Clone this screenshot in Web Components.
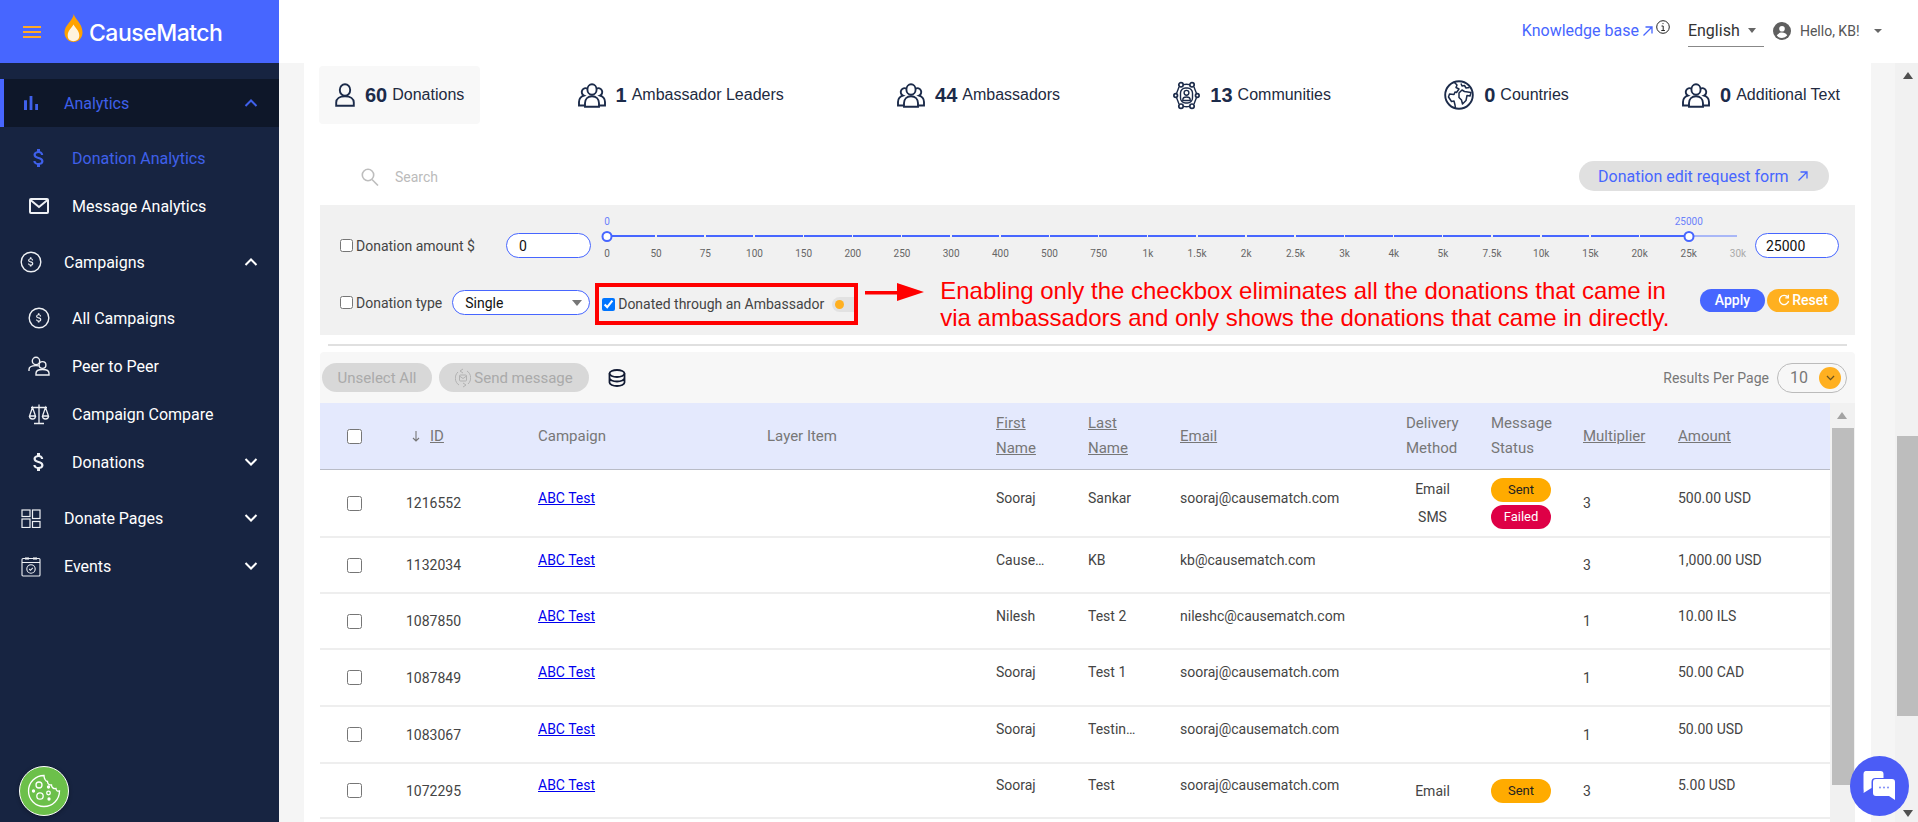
<!DOCTYPE html>
<html lang="en">
<head>
<meta charset="utf-8">
<title>CauseMatch</title>
<style>
  html, body { margin: 0; height: 822px; overflow: hidden; background: #f5f5f5; font-family: Roboto, "Liberation Sans", sans-serif; }
</style>
</head>
<body>
<cm-app>
  <cm-sidebar slot="side"></cm-sidebar>
  <cm-topbar slot="top"></cm-topbar>
  <cm-card slot="main">
    <cm-stats></cm-stats>
    <cm-search-row></cm-search-row>
    <cm-filters></cm-filters>
    <cm-toolbar></cm-toolbar>
    <cm-table></cm-table>
  </cm-card>
</cm-app>
<cm-fab kind="cookie"></cm-fab>
<cm-fab kind="chat"></cm-fab>

<script>
const DOLLAR = "M11.8 10.9c-2.27-.59-3-1.2-3-2.15 0-1.09 1.01-1.85 2.7-1.85 1.78 0 2.44.85 2.5 2.1h2.21c-.07-1.72-1.12-3.3-3.21-3.81V3h-3v2.16c-1.94.42-3.5 1.68-3.5 3.61 0 2.31 1.91 3.46 4.7 4.13 2.5.6 3 1.48 3 2.41 0 .69-.49 1.79-2.7 1.79-2.06 0-2.87-.92-2.98-2.1h-2.2c.12 2.19 1.76 3.42 3.68 3.83V21h3v-2.15c1.95-.37 3.5-1.5 3.5-3.55 0-2.84-2.43-3.81-4.7-4.4z";

const ICONS = {
  bars: `<svg width="24" height="24" viewBox="0 0 24 24" fill="currentColor"><path d="M5 9.2h3V19H5zM10.6 5h2.8v14h-2.8zm5.6 8H19v6h-2.8z"/></svg>`,
  dollar: `<svg width="24" height="24" viewBox="0 0 24 24" fill="currentColor"><path d="${DOLLAR}"/></svg>`,
  mail: `<svg width="22" height="18" viewBox="0 0 22 18" fill="none" stroke="currentColor" stroke-width="2"><rect x="2" y="2" width="18" height="14" rx="1"/><path d="M2.5 3l8.5 7 8.5-7"/></svg>`,
  coin: `<svg width="22" height="22" viewBox="0 0 22 22" fill="none"><circle cx="11" cy="11" r="9.8" stroke="currentColor" stroke-width="1.4"/><path transform="translate(4.7 4.7) scale(.52)" fill="currentColor" d="${DOLLAR}"/></svg>`,
  peer: `<svg width="22" height="20" viewBox="0 0 22 20" fill="none" stroke="currentColor" stroke-width="1.4"><circle cx="8" cy="5" r="3.7"/><path d="M1 15v-1.5C1 11 4 9.6 8 9.6c1 0 2 .1 2.8.3"/><circle cx="14.5" cy="9" r="3.4"/><path d="M8 19v-1.8c0-2.4 3-3.7 6.5-3.7s6.5 1.3 6.5 3.7V19z"/></svg>`,
  scale: `<svg width="22" height="22" viewBox="0 0 22 22" fill="none" stroke="currentColor" stroke-width="1.3"><path d="M11 1.5V20M6 20.5h10M3 4.5h16M4.5 4.5L1.5 13h6zM17.5 4.5L14.5 13h6zM1.5 13a3 3 0 0 0 6 0M14.5 13a3 3 0 0 0 6 0"/></svg>`,
  pages: `<svg width="20" height="19" viewBox="0 0 20 19" fill="none" stroke="currentColor" stroke-width="1.2"><rect x="1" y="1" width="8" height="6.5"/><rect x="11.5" y="1" width="7.5" height="8.5"/><rect x="1" y="10" width="8" height="8.5"/><rect x="11.5" y="12.5" width="7.5" height="6"/></svg>`,
  events: `<svg width="20" height="21" viewBox="0 0 20 21" fill="none" stroke="currentColor" stroke-width="1.1"><rect x="1" y="2.5" width="18" height="17.5" rx="1"/><path d="M1 6.5h18M5 1v3M7 1v3M13 1v3M15 1v3"/><circle cx="10" cy="13" r="4.2"/><path d="M8.2 13l1.3 1.3 2.3-2.4"/></svg>`,
  person: `<svg width="20" height="24" viewBox="0 0 20 24" fill="none" stroke="#1c2b4a" stroke-width="1.9"><ellipse cx="10" cy="7" rx="5.2" ry="5.8"/><path d="M1.2 22.8v-3.3c0-3.6 3.4-6.2 8.8-6.2s8.8 2.6 8.8 6.2v3.3z"/></svg>`,
  group: `<svg width="28" height="25" viewBox="0 0 28 25" fill="none" stroke="#1c2b4a" stroke-width="1.9"><ellipse cx="14" cy="6.5" rx="4.6" ry="5.3"/><path d="M7 23.800v-3.5c0-4.300 3-7 7-7s7 2.700 7 7v3.500z"/><path d="M9.400 5.500A3.700 3.700 0 1 0 6 12.600c-2.800.8-5 3.200-5 6.400v3.500h6M18.600 5.500A3.700 3.700 0 1 1 22 12.600c2.800.8 5 3.200 5 6.400v3.500h-6"/></svg>`,
  community: `<svg width="27" height="29" viewBox="0 0 27 29" fill="none" stroke="#1c2b4a" stroke-width="1.4"><path d="M10.500 3.600a11 11 0 0 1 6 0M21 6l2.500 6.500M23.500 16.500L21 23M16.500 25.400a11 11 0 0 1-6 0M6 23l-2.500-6.500M3.500 12.500L6 6"/><rect x="7.500" y="7" width="12" height="15" rx="5"/><circle cx="13.500" cy="11.800" r="2.400"/><path d="M9.800 19.500v-.8c0-1.500 1.600-2.700 3.700-2.700s3.700 1.200 3.700 2.700v.8z"/><g stroke-width="1.7"><circle cx="8" cy="3.800" r="2.200"/><circle cx="19" cy="3.800" r="2.200"/><circle cx="2.700" cy="14.500" r="1.800"/><circle cx="24.300" cy="14.500" r="1.800"/><circle cx="8" cy="25.200" r="2.200"/><circle cx="19" cy="25.200" r="2.200"/></g></svg>`,
  globe: `<svg width="30" height="30" viewBox="0 0 30 30" fill="none" stroke="#1c2b4a" stroke-width="1.5" stroke-linejoin="round"><circle cx="15" cy="15" r="13.800" stroke-width="1.900"/><path d="M10.500 2.500L13 5l-1 2.500 3 1.500-2.500 3.500-1.500-.5-1 2.500-4.500-.5L4.500 17l3 4.500 2.500-.5 1 4 .5 3.500"/><path d="M17 3.500l1 2.500 2.500-.5L22 8l3.500-.5M15 13l3-3 2.500 1.500 6.500 1-1 3.500-3-.5-1 5-3.500 3.500-1-4-2.500-2.500z"/></svg>`,
  database: `<svg width="18" height="18" viewBox="0 0 18 18" fill="none" stroke="#111a33" stroke-width="1.8"><ellipse cx="9" cy="4.500" rx="7.500" ry="3.500"/><path d="M1.500 4.500v9c0 1.900 3.400 3.500 7.500 3.500s7.500-1.600 7.500-3.500v-9M1.500 9c0 1.900 3.400 3.500 7.500 3.500s7.500-1.600 7.500-3.500"/></svg>`,
  send: `<svg width="16" height="22" viewBox="0 0 16 22" fill="none" stroke="#b2b2b2" stroke-width="1"><path d="M3 5a7.500 8 0 0 0 1 13M13 17a7.500 8 0 0 0-1-13M8 2L5 4l3 2M8 20l3-2-3-2"/><rect x="4.500" y="8" width="7" height="6" rx="1"/><path d="M4.500 9l3.500 2.500L11.500 9"/></svg>`,
  arrow: `<svg width="12" height="12" viewBox="0 0 12 12" fill="none" stroke="currentColor" stroke-width="1.3"><path d="M1.500 10.500L10 2M3.500 2H10v6.500"/></svg>`,
  refresh: `<svg width="12" height="12" viewBox="0 0 12 12" fill="none" stroke="#fff" stroke-width="1.3"><path d="M9.800 3.200A4.600 4.600 0 1 0 10.600 7"/><path d="M10.300.8v3H7.300"/></svg>`,
  chevUp: `<svg width="14" height="8" viewBox="0 0 14 8" fill="none" stroke="currentColor" stroke-width="2"><path d="M1.500 7L7 1.500 12.500 7"/></svg>`,
  chevDown: `<svg width="14" height="8" viewBox="0 0 14 8" fill="none" stroke="currentColor" stroke-width="2"><path d="M1.500 1L7 6.500 12.500 1"/></svg>`,
};

class CmApp extends HTMLElement {
  connectedCallback() {
    this.attachShadow({ mode: "open" }).innerHTML = `
      <style>
        :host { display: grid; grid-template-columns: 279px 1fr; grid-template-rows: 63px 759px; height: 822px; }
        .side { grid-row: 1 / 3; display: block; }
        .main { display: flex; min-height: 0; overflow: hidden; padding-left: 25px; background: #f5f5f5; }
        .gutter { width: 24px; }
        .bar { width: 23px; background: #f1f1f1; display: flex; flex-direction: column; position: relative; }
        .up { width: 0; height: 0; margin: 9px 0 0 8px; border: 5px solid transparent; border-top: 0; border-bottom: 7px solid #505050; }
        .thumb { position: absolute; left: 2px; right: 0; top: 373px; height: 280px; background: #bdbdbd; }
        .down { position: absolute; left: 8px; bottom: 5px; width: 0; height: 0; border: 5px solid transparent; border-bottom: 0; border-top: 7px solid #505050; z-index: 15; }
      </style>
      <slot name="side" class="side"></slot>
      <slot name="top"></slot>
      <div class="main">
        <slot name="main"></slot>
        <div class="gutter"></div>
        <div class="bar"><div class="up"></div><div class="thumb"></div><div class="down"></div></div>
      </div>`;
  }
}
customElements.define("cm-app", CmApp);

class CmNavItem extends HTMLElement {
  connectedCallback() {
    const icon = ICONS[this.getAttribute("icon")] || "";
    const sub = this.hasAttribute("sub");
    const active = this.hasAttribute("active");
    const open = this.hasAttribute("current");
    const chev = this.getAttribute("chev");
    this.attachShadow({ mode: "open" }).innerHTML = `
      <style>
        :host { display: flex; align-items: center; height: 48px; padding-left: ${sub ? 26 : 18}px; color: ${active || open ? "#3f60ea" : "#fff"};
          font: 400 16px Roboto, sans-serif; ${open ? "background: #0e1729; box-shadow: inset 4px 0 0 #4766ff;" : ""} }
        .icon { width: 25px; margin-right: 21px; display: flex; justify-content: center; align-items: center; flex: none; color: ${active || open ? "#3f60ea" : "#eef0f4"}; }
        .label { flex: 1; }
        .chev { width: 14px; margin-right: 21px; display: flex; }
      </style>
      <span class="icon">${icon}</span>
      <span class="label"><slot></slot></span>
      ${chev ? `<span class="chev">${chev === "up" ? ICONS.chevUp : ICONS.chevDown}</span>` : ""}`;
  }
}
customElements.define("cm-nav-item", CmNavItem);

class CmSidebar extends HTMLElement {
  connectedCallback() {
    this.attachShadow({ mode: "open" }).innerHTML = `
      <style>
        :host { display: block; height: 822px; background: #172441; }
        .brand { height: 63px; background: #4766ff; display: flex; align-items: center; padding-left: 23px; margin-bottom: 16px; }
        .burger { width: 18px; height: 12px; border-top: 2px solid #ffa826; border-bottom: 2px solid #ffa826; box-sizing: border-box; position: relative; margin-right: 23px; }
        .burger::after { content: ""; position: absolute; left: 0; right: 0; top: 3px; height: 2px; background: #ffa826; }
        .flame { display: block; margin-right: 6px; margin-top: -8px; }
        .name { color: #fff; font: 500 23px Inter, sans-serif; letter-spacing: -.5px; margin-top: 3px; }
        .sub { padding: 7px 0 8px; }
        .gap { height: 1px; }
      </style>
      <div class="brand">
        <span class="burger"></span>
        <svg class="flame" width="19" height="28" viewBox="0 0 19 28"><path fill="#ffa200" d="M9.800 0c.6 4.500 8.700 9.500 8.700 18.300 0 5.700-4 9.700-9 9.700s-9-4-9-9.700C.5 11 8.700 7 9.800 0z"/><path fill="#fff4df" d="M9.500 10.500c1.800 3.300 5.800 6.300 5.800 11 0 3.600-2.600 5.700-5.800 5.700s-5.800-2.100-5.800-5.700c0-4.700 4-7.700 5.800-11z"/></svg>
        <span class="name">CauseMatch</span>
      </div>
      <cm-nav-item icon="bars" current chev="up">Analytics</cm-nav-item>
      <div class="sub">
        <cm-nav-item icon="dollar" sub active>Donation Analytics</cm-nav-item>
        <cm-nav-item icon="mail" sub>Message Analytics</cm-nav-item>
      </div>
      <cm-nav-item icon="coin" chev="up">Campaigns</cm-nav-item>
      <div class="sub" style="padding-bottom:0;padding-top:8px">
        <cm-nav-item icon="coin" sub>All Campaigns</cm-nav-item>
        <cm-nav-item icon="peer" sub>Peer to Peer</cm-nav-item>
        <cm-nav-item icon="scale" sub>Campaign Compare</cm-nav-item>
        <cm-nav-item icon="dollar" sub chev="down">Donations</cm-nav-item>
      </div>
      <div style="height:8px"></div>
      <cm-nav-item icon="pages" chev="down">Donate Pages</cm-nav-item>
      <cm-nav-item icon="events" chev="down">Events</cm-nav-item>`;
  }
}
customElements.define("cm-sidebar", CmSidebar);

class CmTopbar extends HTMLElement {
  connectedCallback() {
    this.attachShadow({ mode: "open" }).innerHTML = `
      <style>
        :host { display: flex; align-items: flex-start; justify-content: flex-end; height: 63px; background: #fff; font-family: Roboto, sans-serif; padding-right: 36px; box-sizing: border-box; }
        .kb { display: flex; align-items: center; color: #4766ff; font-size: 16px; margin-top: 21px; line-height: 20px; }
        .kb svg { margin-left: 3px; }
        .info { margin: 20px 18px 0 2px; display: block; }
        .lang { width: 76px; height: 47px; box-sizing: border-box; border-bottom: 1px solid #888; display: flex; align-items: center; color: #333; font-size: 16px; padding-top: 15px; margin-right: 9px; }
        .caret { width: 0; height: 0; border: 4.5px solid transparent; border-bottom: 0; border-top: 5px solid #666; }
        .lang .caret { margin-left: 8px; }
        .user { display: flex; align-items: center; margin-top: 23px; font-size: 14px; color: #555; height: 16px; }
        .user svg { margin-right: 9px; }
        .user .caret { margin-left: 14.5px; border-width: 4px; border-top-width: 4px; border-bottom: 0; }
      </style>
      <a class="kb">Knowledge base ${ICONS.arrow}</a>
      <svg class="info" width="14" height="14" viewBox="0 0 14 14" fill="none" stroke="#222" stroke-width="1"><circle cx="7" cy="7" r="6.3"/><path d="M5.500 6h1.700v4.200M5.300 10.500h3.600M6.500 3.600h1"/></svg>
      <div class="lang">English<span class="caret"></span></div>
      <div class="user">
        <svg width="18" height="18" viewBox="0 0 18 18"><circle cx="9" cy="9" r="9" fill="#5f5f5f"/><circle cx="9" cy="6.8" r="2.8" fill="#fff"/><path fill="#fff" d="M3.800 13.500c1-2 3-2.900 5.200-2.900s4.200.9 5.200 2.900A6.700 6.700 0 0 1 9 16a6.700 6.700 0 0 1-5.200-2.500z"/></svg>
        Hello, KB!<span class="caret"></span>
      </div>`;
  }
}
customElements.define("cm-topbar", CmTopbar);

class CmCard extends HTMLElement {
  connectedCallback() {
    this.attachShadow({ mode: "open" }).innerHTML = `
      <style>
        :host { display: block; width: 1567px; height: 759px; background: #fff; box-sizing: border-box; padding: 3px 15px 0; overflow: hidden; }
      </style>
      <slot></slot>`;
  }
}
customElements.define("cm-card", CmCard);

class CmStat extends HTMLElement {
  connectedCallback() {
    const icon = ICONS[this.getAttribute("icon")];
    this.attachShadow({ mode: "open" }).innerHTML = `
      <style>
        :host { display: flex; align-items: center; height: 58px; padding: 0 16px; border-radius: 4px; font-family: "Liberation Sans", Arial, sans-serif; color: #1c2b4a; white-space: nowrap;
          ${this.hasAttribute("selected") ? "background: #f8f8f8;" : ""} }
        .icon { display: flex; margin-right: 10px; }
        b { font-size: 20px; font-weight: 700; margin-right: 5px; }
        span.t { font-size: 16px; color: #222a40; }
      </style>
      <span class="icon">${icon}</span><b>${this.getAttribute("count")}</b><span class="t"><slot></slot></span>`;
  }
}
customElements.define("cm-stat", CmStat);

class CmStats extends HTMLElement {
  connectedCallback() {
    this.attachShadow({ mode: "open" }).innerHTML = `
      <style>:host { display: flex; justify-content: space-between; }</style>
      <cm-stat icon="person" count="60" selected>Donations</cm-stat>
      <cm-stat icon="group" count="1">Ambassador Leaders</cm-stat>
      <cm-stat icon="group" count="44">Ambassadors</cm-stat>
      <cm-stat icon="community" count="13">Communities</cm-stat>
      <cm-stat icon="globe" count="0">Countries</cm-stat>
      <cm-stat icon="group" count="0">Additional Text</cm-stat>`;
  }
}
customElements.define("cm-stats", CmStats);

class CmSearchRow extends HTMLElement {
  connectedCallback() {
    this.attachShadow({ mode: "open" }).innerHTML = `
      <style>
        :host { display: flex; align-items: center; justify-content: space-between; height: 30px; margin: 37px 27px 14px 42px; font-family: Roboto, sans-serif; }
        .search { display: flex; align-items: center; color: #bbb; font-size: 14px; padding-top: 2px; }
        .search svg { margin-right: 16px; }
        .btn { display: flex; align-items: center; height: 30px; width: 250px; box-sizing: border-box; padding-left: 19px; border-radius: 15px; background: #e0e0e0; color: #4766ff; font-size: 16px; }
        .btn svg { margin-left: 8px; }
      </style>
      <div class="search">
        <svg width="18" height="18" viewBox="0 0 18 18" fill="none" stroke="#bdbdbd" stroke-width="1.6"><circle cx="7" cy="7" r="5.7"/><path d="M11 11.500l6 6"/></svg>
        Search
      </div>
      <a class="btn">Donation edit request form ${ICONS.arrow}</a>`;
  }
}
customElements.define("cm-search-row", CmSearchRow);

class CmSlider extends HTMLElement {
  connectedCallback() {
    const labels = ["0","50","75","100","150","200","250","300","400","500","750","1k","1.5k","2k","2.5k","3k","4k","5k","7.5k","10k","15k","20k","25k","30k"];
    const step = 49.174;
    const ticks = labels.map((l, i) => `
      <span class="label${i === 23 ? " off" : ""}" style="left:${i * step}px">${l}</span>
      ${i ? `<i class="notch" style="left:${i * step - 1}px"></i>` : ""}`).join("");
    this.attachShadow({ mode: "open" }).innerHTML = `
      <style>
        :host { display: block; position: relative; width: 1131px; height: 25px; font-family: Roboto, sans-serif; }
        .track { position: absolute; left: 0; width: 100%; top: 2px; height: 2px; background: #a9b7f7; }
        .fill { position: absolute; left: 0; top: 2px; height: 2px; width: ${22 * step}px; background: #4766ff; }
        .notch { position: absolute; top: 1px; width: 1.5px; height: 4px; background: #f1f1f1; }
        .label { position: absolute; top: 15px; transform: translateX(-50%); font-size: 10px; line-height: 12px; color: #666; }
        .label.off { color: #aaa; }
        .value { position: absolute; top: -17px; transform: translateX(-50%); font-size: 10px; line-height: 12px; color: #6b82fb; }
        .thumb { position: absolute; top: -2.5px; width: 11px; height: 11px; box-sizing: border-box; transform: translateX(-50%); border-radius: 50%; background: #fff; border: 2px solid #4766ff; z-index: 2; }
      </style>
      <div class="track"></div><div class="fill"></div>
      ${ticks}
      <span class="value" style="left:0">0</span><span class="thumb" style="left:0"></span>
      <span class="value" style="left:${22 * step}px">25000</span><span class="thumb" style="left:${22 * step}px"></span>`;
  }
}
customElements.define("cm-slider", CmSlider);

class CmFilters extends HTMLElement {
  connectedCallback() {
    this.attachShadow({ mode: "open" }).innerHTML = `
      <style>
        :host { display: block; margin: 0 1px; font-family: Roboto, sans-serif; font-size: 14px; color: #444; }
        .panel { height: 130px; box-sizing: border-box; background: #f1f1f1; padding: 28px 16px 0 20px; }
        .row { display: flex; align-items: center; height: 25px; }
        .row + .row { margin-top: 32px; }
        label { display: flex; align-items: center; white-space: nowrap; }
        input[type=checkbox] { margin: 0 3px 0 0; width: 13px; height: 13px; }
        .field { height: 25px; box-sizing: border-box; border: 1px solid #4766ff; border-radius: 12.5px; background: #fff; color: #111; display: flex; align-items: center; padding-left: 12px; }
        .amt { width: 85px; margin-left: 31px; margin-right: 16px; }
        .amt2 { width: 84px; margin-left: 17px; padding-left: 10px; }
        .select { width: 138px; margin-left: 10px; justify-content: space-between; padding-right: 7px; }
        .caret { width: 0; height: 0; border: 5px solid transparent; border-bottom: 0; border-top: 6px solid #777; }
        .mark { width: 263px; height: 42px; box-sizing: border-box; border: 4px solid #f00; margin: 3px 0 0 5px; padding-left: 3px; display: flex; align-items: center; flex: none; overflow: hidden; }
        .toggle { width: 30px; height: 15px; border-radius: 8px; background: #e2e2e2; margin-left: 8px; display: flex; align-items: center; padding-left: 3px; box-sizing: border-box; flex: none; }
        .toggle i { width: 9px; height: 9px; border-radius: 50%; background: #ffb020; }
        .pointer { margin: -20px 16px 0 7px; flex: none; display: block; }
        .note { color: #f00; font: 400 24px/27px "Liberation Sans", Arial, sans-serif; white-space: nowrap; margin-top: 3px; }
        .btns { margin-left: auto; display: flex; gap: 2px; margin-top: -5px; }
        .btn { height: 23px; border-radius: 12px; color: #fff; font-weight: 500; font-size: 14px; display: flex; align-items: center; justify-content: center; }
        .apply { width: 65px; background: #4766ff; }
        .reset { width: 72px; background: #ffb020; gap: 2px; }
      </style>
      <div class="panel">
        <div class="row">
          <label><input type="checkbox">Donation amount $</label>
          <div class="field amt">0</div>
          <cm-slider></cm-slider>
          <div class="field amt2">25000</div>
        </div>
        <div class="row">
          <label><input type="checkbox">Donation type</label>
          <div class="field select">Single<span class="caret"></span></div>
          <div class="mark">
            <label><input type="checkbox" checked>Donated through an Ambassador</label>
            <span class="toggle"><i></i></span>
          </div>
          <svg class="pointer" width="59" height="20" viewBox="0 0 59 20"><path fill="#f00" d="M0 8h32V0l27 9-27 9v-6.500H0z"/></svg>
          <div class="note">Enabling only the checkbox eliminates all the donations that came in<br>via ambassadors and only shows the donations that came in directly.</div>
          <div class="btns">
            <div class="btn apply">Apply</div>
            <div class="btn reset">${ICONS.refresh}Reset</div>
          </div>
        </div>
      </div>`;
  }
}
customElements.define("cm-filters", CmFilters);

class CmToolbar extends HTMLElement {
  connectedCallback() {
    this.attachShadow({ mode: "open" }).innerHTML = `
      <style>
        :host { display: block; margin: 0 1px; font-family: Roboto, sans-serif; font-size: 14px; }
        .rule { height: 2px; background: #e0e0e0; margin: 9px 8px 6px; }
        .bar { height: 51px; box-sizing: border-box; background: #f7f7f7; border-radius: 4px 4px 0 0; display: flex; align-items: center; padding: 0 8px 0 2px; }
        .pill { height: 29px; border-radius: 14.5px; background: #d8d8d8; color: #aaa; display: flex; align-items: center; justify-content: center; gap: 3px; font-size: 15px; }
        .db { display: flex; margin-left: 19px; }
        .right { margin-left: auto; display: flex; align-items: center; color: #777; }
        .per { width: 70px; height: 30px; box-sizing: border-box; margin-left: 8px; border: 1px solid #bbb; border-radius: 15px; display: flex; align-items: center; justify-content: space-between; padding: 0 5px 0 12px; font-size: 16px; color: #777; }
        .dot { width: 22px; height: 22px; border-radius: 50%; background: #ffb020; display: flex; align-items: center; justify-content: center; color: #6b5320; }
      </style>
      <div class="rule"></div>
      <div class="bar">
        <div class="pill" style="width:110px;margin-right:7px">Unselect All</div>
        <div class="pill" style="width:150px">${ICONS.send}Send message</div>
        <span class="db">${ICONS.database}</span>
        <div class="right">Results Per Page
          <div class="per">10<span class="dot"><svg width="9" height="6" viewBox="0 0 14 8" fill="none" stroke="currentColor" stroke-width="2"><path d="M1.500 1L7 6.500 12.500 1"/></svg></span></div>
        </div>
      </div>`;
  }
}
customElements.define("cm-toolbar", CmToolbar);

const COLS = "86px 132px 229px 229px 92px 92px 226px 85px 92px 95px 152px";

class CmRow extends HTMLElement {
  connectedCallback() {
    const a = (n) => this.getAttribute(n) || "";
    const delivery = a("delivery") ? a("delivery").split(",") : [];
    const status = a("status") ? a("status").split(",") : [];
    this.attachShadow({ mode: "open" }).innerHTML = `
      <style>
        :host { display: grid; grid-template-columns: ${COLS}; align-items: center; height: ${a("height")}px; box-sizing: border-box; border-bottom: 2px solid #eee; font-family: Roboto, sans-serif; font-size: 14px; color: #444; background: #fff; }
        input { width: 15px; height: 15px; margin: 0 0 0 27px; display: block; }
        .up { padding-bottom: 11px; }
        a { color: #0000ee; text-decoration: underline; }
        .delivery { width: 53px; text-align: center; line-height: 28px; }
        .status { display: flex; flex-direction: column; gap: 3px; width: 60px; }
        .pill { height: 24px; border-radius: 12px; display: flex; align-items: center; justify-content: center; font-size: 13px; }
        .Sent { background: #ffab00; color: #222; }
        .Failed { background: #de0046; color: #fff; }
      </style>
      <span><input type="checkbox"></span>
      <span>${a("no")}</span>
      <span class="up"><a>ABC Test</a></span>
      <span></span>
      <span class="up">${a("first")}</span>
      <span class="up">${a("last")}</span>
      <span class="up">${a("email")}</span>
      <div class="delivery">${delivery.map((d) => `<div>${d}</div>`).join("")}</div>
      <div class="status">${status.map((s) => `<div class="pill ${s}">${s}</div>`).join("")}</div>
      <span>${a("mult")}</span>
      <span class="up">${a("amount")}</span>`;
  }
}
customElements.define("cm-row", CmRow);

class CmTable extends HTMLElement {
  connectedCallback() {
    this.attachShadow({ mode: "open" }).innerHTML = `
      <style>
        :host { display: flex; margin: 0 1px; font-family: Roboto, sans-serif; }
        .body { width: 1510px; flex: none; }
        .head { display: grid; grid-template-columns: ${COLS}; align-items: center; height: 67px; box-sizing: border-box; background: #e4e9fd; border-bottom: 1px solid #b9bcc6; font-size: 15px; line-height: 25px; color: #777; }
        .head input { width: 15px; height: 15px; margin: 0 0 0 27px; display: block; }
        .sort { padding-left: 6px; display: flex; gap: 10px; align-items: center; }
        u { text-decoration: underline; }
        .scroll { width: 25px; height: 419px; background: #f1f1f1; position: relative; flex: none; }
        .cap { height: 25px; }
        .cap i { display: block; width: 0; height: 0; position: relative; top: 9px; left: 7px; border: 5px solid transparent; border-top: 0; border-bottom: 7px solid #a3a3a3; }
        .t { position: absolute; left: 1.5px; width: 22px; top: 25px; height: 357px; background: #bdbdbd; }
      </style>
      <div class="body">
        <div class="head">
          <span><input type="checkbox"></span>
          <span class="sort"><svg width="8" height="11" viewBox="0 0 8 11" fill="none" stroke="#777" stroke-width="1.1"><path d="M4 0v10M1 7l3 3 3-3"/></svg><u>ID</u></span>
          <span>Campaign</span>
          <span>Layer Item</span>
          <u>First<br>Name</u>
          <u>Last<br>Name</u>
          <u>Email</u>
          <span>Delivery<br>Method</span>
          <span>Message<br>Status</span>
          <u>Multiplier</u>
          <u>Amount</u>
        </div>
        <cm-row height="68" no="1216552" first="Sooraj" last="Sankar" email="sooraj@causematch.com" delivery="Email,SMS" status="Sent,Failed" mult="3" amount="500.00 USD"></cm-row>
        <cm-row height="56" no="1132034" first="Cause…" last="KB" email="kb@causematch.com" mult="3" amount="1,000.00 USD"></cm-row>
        <cm-row height="56" no="1087850" first="Nilesh" last="Test 2" email="nileshc@causematch.com" mult="1" amount="10.00 ILS"></cm-row>
        <cm-row height="57" no="1087849" first="Sooraj" last="Test 1" email="sooraj@causematch.com" mult="1" amount="50.00 CAD"></cm-row>
        <cm-row height="57" no="1083067" first="Sooraj" last="Testin…" email="sooraj@causematch.com" mult="1" amount="50.00 USD"></cm-row>
        <cm-row height="55" no="1072295" first="Sooraj" last="Test" email="sooraj@causematch.com" delivery="Email" status="Sent" mult="3" amount="5.00 USD"></cm-row>
      </div>
      <div class="scroll"><div class="cap"><i></i></div><div class="t"></div></div>`;
  }
}
customElements.define("cm-table", CmTable);

class CmFab extends HTMLElement {
  connectedCallback() {
    const cookie = this.getAttribute("kind") === "cookie";
    this.attachShadow({ mode: "open" }).innerHTML = `
      <style>
        :host { position: fixed; z-index: 10; display: flex; align-items: center; justify-content: center; border-radius: 50%; box-sizing: border-box;
          ${cookie
            ? "left: 19px; top: 766px; width: 50px; height: 50px; background: #6cc04a; border: 1.5px solid #fff; box-shadow: 0 1px 4px rgba(0,0,0,.3);"
            : "left: 1850px; top: 756px; width: 59px; height: 60px; background: #4b5cf6;"} }
      </style>
      ${cookie
        ? `<svg width="34" height="34" viewBox="0 0 34 34" fill="none" stroke="#fff" stroke-width="1.3"><path d="M17 1.500a15.500 15.500 0 1 0 15.500 15.500c-2 .5-3.500-.5-3.500-2.500-2.500.5-4.500-1-4.500-3.500-2.500 0-4-1.500-4-3.500-2 0-3.500-3.500-3.500-6z"/><circle cx="12" cy="11" r="3"/><circle cx="13" cy="22" r="3.2"/><circle cx="21.5" cy="19" r="1.8"/><circle cx="21.5" cy="13" r="1" fill="#fff"/><circle cx="6.5" cy="17" r="1" fill="#fff"/><circle cx="22" cy="25" r="1" fill="#fff"/></svg>`
        : `<svg width="34" height="30" viewBox="0 0 34 30"><path fill="#fff" d="M3 0h15a3 3 0 0 1 3 3v4H13a4 4 0 0 0-4 4v6l-8 5c.5-1.500 0-3 0-5V3a3 3 0 0 1 2-3z" transform="translate(-.5 0)"/><path fill="#fff" d="M13 8h16a3 3 0 0 1 3 3v18l-6-4H13a3 3 0 0 1-3-3V11a3 3 0 0 1 3-3z"/><g fill="#7d8bf7"><circle cx="17" cy="16.5" r="1"/><circle cx="21" cy="16.5" r="1"/><circle cx="25" cy="16.5" r="1"/></g></svg>`}`;
  }
}
customElements.define("cm-fab", CmFab);
</script>
</body>
</html>
